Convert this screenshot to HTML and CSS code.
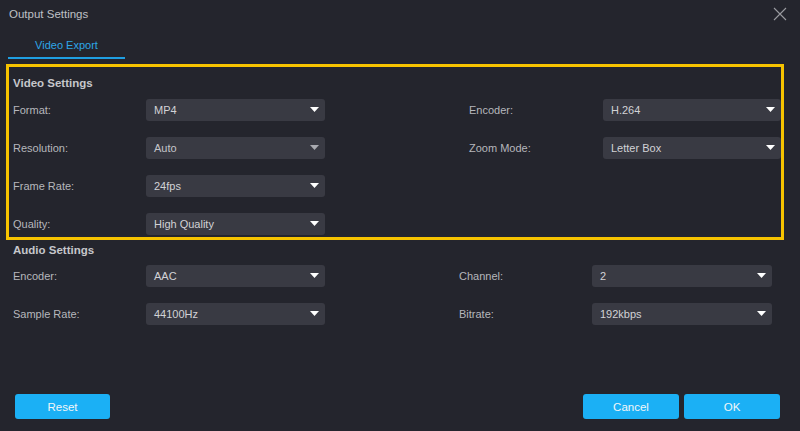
FILE: index.html
```html
<!DOCTYPE html>
<html>
<head>
<meta charset="utf-8">
<link rel="stylesheet" href="styles.css">
</head>
<body>
<div class="header">
  <span class="title">Output Settings</span>
  <svg class="close" width="14" height="14" viewBox="0 0 14 14"><path d="M1 1L13 13M13 1L1 13" stroke="#9a9ba0" stroke-width="1.1" fill="none"/></svg>
</div>
<div class="tabs"><div class="tab">Video Export</div></div>

<section class="video">
  <div class="heading">Video Settings</div>
  <div class="rows">
    <div class="row">
      <span class="label">Format:</span>
      <div class="select"><span>MP4</span><svg width="9" height="5" viewBox="0 0 9 5"><path d="M0 0H9L4.5 5Z" fill="#fff"/></svg></div>
      <span class="label r-label">Encoder:</span>
      <div class="select r-select"><span>H.264</span><svg width="9" height="5" viewBox="0 0 9 5"><path d="M0 0H9L4.5 5Z" fill="#fff"/></svg></div>
    </div>
    <div class="row">
      <span class="label">Resolution:</span>
      <div class="select dim"><span>Auto</span><svg width="9" height="5" viewBox="0 0 9 5"><path d="M0 0H9L4.5 5Z" fill="#a9aab0"/></svg></div>
      <span class="label r-label">Zoom Mode:</span>
      <div class="select r-select"><span>Letter Box</span><svg width="9" height="5" viewBox="0 0 9 5"><path d="M0 0H9L4.5 5Z" fill="#fff"/></svg></div>
    </div>
    <div class="row">
      <span class="label">Frame Rate:</span>
      <div class="select"><span>24fps</span><svg width="9" height="5" viewBox="0 0 9 5"><path d="M0 0H9L4.5 5Z" fill="#fff"/></svg></div>
    </div>
    <div class="row">
      <span class="label">Quality:</span>
      <div class="select"><span>High Quality</span><svg width="9" height="5" viewBox="0 0 9 5"><path d="M0 0H9L4.5 5Z" fill="#fff"/></svg></div>
    </div>
  </div>
</section>

<section class="audio">
  <div class="heading">Audio Settings</div>
  <div class="rows">
    <div class="row">
      <span class="label">Encoder:</span>
      <div class="select"><span>AAC</span><svg width="9" height="5" viewBox="0 0 9 5"><path d="M0 0H9L4.5 5Z" fill="#fff"/></svg></div>
      <span class="label a-label">Channel:</span>
      <div class="select a-select"><span>2</span><svg width="9" height="5" viewBox="0 0 9 5"><path d="M0 0H9L4.5 5Z" fill="#fff"/></svg></div>
    </div>
    <div class="row">
      <span class="label">Sample Rate:</span>
      <div class="select"><span>44100Hz</span><svg width="9" height="5" viewBox="0 0 9 5"><path d="M0 0H9L4.5 5Z" fill="#fff"/></svg></div>
      <span class="label a-label">Bitrate:</span>
      <div class="select a-select"><span>192kbps</span><svg width="9" height="5" viewBox="0 0 9 5"><path d="M0 0H9L4.5 5Z" fill="#fff"/></svg></div>
    </div>
  </div>
</section>

<div class="footer">
  <button class="btn reset">Reset</button>
  <div class="actions">
    <button class="btn">Cancel</button>
    <button class="btn">OK</button>
  </div>
</div>
</body>
</html>
```
FILE: styles.css
```css
* { box-sizing: border-box; }
html, body { margin: 0; padding: 0; }
body {
  width: 800px;
  height: 431px;
  background: #24252d;
  font-family: "Liberation Sans", Arial, sans-serif;
  font-size: 11px;
  color: #b6b7bc;
  display: flex;
  flex-direction: column;
  overflow: hidden;
}
.header {
  height: 28px;
  padding: 0 13px 0 9px;
  display: flex;
  align-items: center;
  justify-content: space-between;
}
.title { color: #bfc0c5; font-size: 11.5px; }
.close { display: block; }
.tabs {
  margin-top: 4px;
  padding-left: 8px;
  display: flex;
}
.tab {
  width: 117px;
  height: 27px;
  padding-top: 2px;
  line-height: 23px;
  text-align: center;
  color: #2ea6e6;
  border-bottom: 2px solid #1f9fe2;
}
.video {
  margin: 5px 0 0 6px;
  width: 778px;
  border: 3px solid #f6c300;
  padding: 8px 0 2px 4px;
}
.heading {
  font-weight: bold;
  font-size: 11.5px;
  color: #c6c7cb;
  line-height: 16px;
  height: 16px;
  margin-bottom: 8px;
}
.rows {
  display: flex;
  flex-direction: column;
  gap: 16px;
}
.row {
  display: flex;
  align-items: center;
  height: 22px;
}
.label { width: 133px; flex: none; }
.select {
  width: 179px;
  height: 22px;
  flex: none;
  background: #393a43;
  border-radius: 3px;
  padding: 0 6px 0 8px;
  display: flex;
  align-items: center;
  justify-content: space-between;
  color: #d2d2d6;
}
.select svg { display: block; margin-top: -1px; }
.select.dim { color: #c4c5ca; }
.r-label { margin-left: 144px; width: 134px; }
.r-select { width: 178px; padding-right: 6px; }
.audio {
  margin-top: 2px;
  padding-left: 13px;
}
.audio .heading { margin-bottom: 7px; }
.a-label { margin-left: 134px; width: 133px; }
.a-select { width: 180px; }
.footer {
  margin-top: auto;
  padding: 0 20px 12px 15px;
  display: flex;
  justify-content: space-between;
  align-items: center;
}
.actions { display: flex; gap: 5px; }
.btn {
  width: 96px;
  height: 25px;
  border: none;
  border-radius: 3px;
  background: #1bb0f5;
  color: #f2f6f8;
  font-family: "Liberation Sans", Arial, sans-serif;
  font-size: 11.5px;
  padding: 0;
}
.btn.reset { width: 95px; }
```
